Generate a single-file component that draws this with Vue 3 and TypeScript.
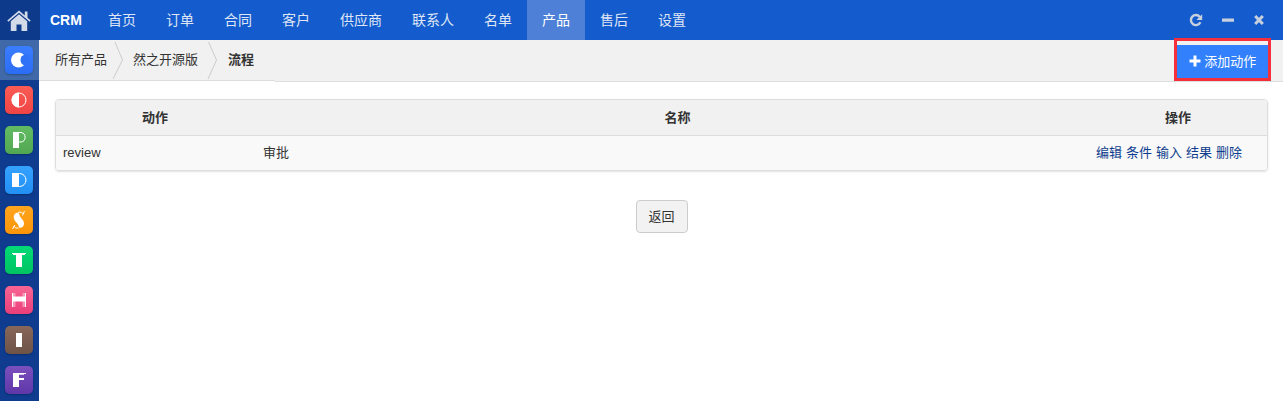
<script setup lang="ts">
const navItems: string[] = ['首页', '订单', '合同', '客户', '供应商', '联系人', '名单', '产品', '售后', '设置']
const apps: { key: string; color: string; top: string }[] = [
  { key: 'c', color: '#2b6cf5', top: '#3a7dff' },
  { key: 'o', color: '#f04444', top: '#fa5c54' },
  { key: 'p', color: '#52a852', top: '#62bb62' },
  { key: 'd', color: '#2290f4', top: '#35a2ff' },
  { key: 's', color: '#fb9508', top: '#ffa51e' },
  { key: 't', color: '#00c462', top: '#00d977' },
  { key: 'h', color: '#ea3f79', top: '#f76594' },
  { key: 'i', color: '#6f5347', top: '#86675a' },
  { key: 'f', color: '#5f37a8', top: '#7a50bd' }
]
const ops: string[] = ['编辑', '条件', '输入', '结果', '删除']
</script>

<template>
  <div class="page">
    <aside class="side">
      <div class="home">
        <svg width="24" height="21" viewBox="0 0 24 21">
          <path d="M12 0.500 0.300 10.500 1.300 11.700 12 2.700 22.700 11.700 23.700 10.500 20.500 7.800V1.500H17.800V5.500Z" fill="#d3dae8" />
          <path d="M12 4.300 3.800 11.200V21H9.500V14.500H14.500V21H20.200V11.200Z" fill="#d3dae8" />
        </svg>
      </div>
      <div v-for="(a, i) in apps" :key="a.key" class="cell" :class="{ on: i === 0 }">
        <span class="tile" :style="{ background: `linear-gradient(${a.top}, ${a.color})` }">
          <svg width="28" height="28" viewBox="0 0 28 28" fill="#fff">
            <template v-if="a.key === 'c'">
              <circle cx="13.500" cy="14" r="7.500" />
              <ellipse cx="20" cy="14" rx="4.500" ry="5.200" fill="#2f72f8" />
            </template>
            <template v-else-if="a.key === 'o'">
              <path d="M14 6.500A7.500 7.500 0 0 0 14 21.500Z" />
              <circle cx="14" cy="14" r="7" fill="none" stroke="#fff" stroke-width="1" />
            </template>
            <template v-else-if="a.key === 'p'">
              <rect x="8" y="6" width="6" height="16" />
              <path d="M14 6.500H16A4.800 4.800 0 0 1 16 16H14" fill="none" stroke="#fff" stroke-width="1" />
            </template>
            <template v-else-if="a.key === 'd'">
              <rect x="7" y="7" width="7" height="14" />
              <path d="M14 7.500H14.500A6.500 6.500 0 0 1 14.500 20.500H14" fill="none" stroke="#fff" stroke-width="1" />
            </template>
            <template v-else-if="a.key === 's'">
              <path d="M9.500 8.500C11 6 14.500 6.500 14.500 9 14.500 11.500 19 13.500 19 17.500 19 21 16 22.500 13.800 21.500 14.500 19 11 16.500 9.500 14 8.500 12 8.500 10 9.500 8.500Z" />
              <path d="M13 6.500C15.500 5.500 17.500 6.500 18.500 8M19.500 5 17.500 9.500M13.500 22C11.500 22.500 9.500 21.500 8.500 20M7.500 23 10 19" fill="none" stroke="#fff" stroke-width="1" />
            </template>
            <template v-else-if="a.key === 't'">
              <rect x="7" y="7" width="14" height="1" />
              <rect x="8" y="8" width="12" height="1" />
              <rect x="11" y="8" width="6" height="13" />
            </template>
            <template v-else-if="a.key === 'h'">
              <rect x="7" y="7" width="1" height="14" />
              <rect x="20" y="7" width="1" height="14" />
              <rect x="8" y="7" width="2.500" height="14" opacity=".4" />
              <rect x="17.500" y="7" width="2.500" height="14" opacity=".4" />
              <rect x="8" y="10.500" width="12" height="5" />
            </template>
            <template v-else-if="a.key === 'i'">
              <rect x="11" y="7" width="6" height="14" />
            </template>
            <template v-else>
              <rect x="8" y="7" width="6" height="14" />
              <rect x="14" y="7" width="7" height="1" />
              <rect x="14" y="8" width="5" height="1" opacity=".7" />
              <rect x="14" y="12" width="5" height="2" />
            </template>
          </svg>
        </span>
      </div>
    </aside>

    <main class="main">
      <header class="top">
        <strong class="brand">CRM</strong>
        <nav class="nav">
          <a v-for="n in navItems" :key="n" class="nav-item" :class="{ active: n === '产品' }">{{ n }}</a>
        </nav>
        <div class="win">
          <svg width="12" height="14" viewBox="0 0 12 14" overflow="visible">
            <path d="M10.400 9.300A5 5 0 1 1 9.800 3.900" fill="none" stroke="#c9d0dd" stroke-width="2.400" />
            <path d="M12.200 1.200V7H6.400Z" fill="#c9d0dd" />
          </svg>
          <svg width="12" height="14" viewBox="0 0 12 14"><rect x="0" y="5.500" width="12" height="3.200" rx="0.500" fill="#c9d0dd" /></svg>
          <svg width="10" height="14" viewBox="0 0 10 14">
            <path d="M1.200 3 8.800 11M8.800 3 1.200 11" stroke="#c9d0dd" stroke-width="3" />
          </svg>
        </div>
      </header>

      <div class="sub">
        <div class="crumbs">
          <span class="crumb">所有产品</span>
          <svg class="chev first" width="10" height="41" viewBox="0 0 10 41"><path d="M1 2 8.500 20 -1 39" fill="none" stroke="#ccc" /></svg>
          <span class="crumb">然之开源版</span>
          <svg class="chev" width="10" height="41" viewBox="0 0 10 41"><path d="M0.500 2 8.500 20 0 39" fill="none" stroke="#ccc" /></svg>
          <strong class="crumb">流程</strong>
        </div>
        <div class="mark">
          <button class="add" type="button">
            <svg width="12" height="12" viewBox="0 0 12 12"><path d="M4.500 0.500H7.500V4.500H11.500V7.500H7.500V11.500H4.500V7.500H0.500V4.500H4.500Z" fill="#fff" /></svg>
            添加动作
          </button>
        </div>
      </div>

      <section class="content">
        <div class="panel">
          <div class="row head">
            <div class="c1">动作</div>
            <div class="c2">名称</div>
            <div class="c3">操作</div>
          </div>
          <div class="row body">
            <div class="c1">review</div>
            <div class="c2">审批</div>
            <div class="c3 ops"><a v-for="o in ops" :key="o">{{ o }}</a></div>
          </div>
        </div>
        <div class="foot"><button class="back" type="button">返回</button></div>
      </section>
    </main>
  </div>
</template>

<style scoped>
.page {
  display: flex;
  width: 1283px;
  height: 401px;
  overflow: hidden;
  background: #fff;
  color: #333;
  font: 13px/20px "Liberation Sans", "Noto Sans CJK SC", sans-serif;
}
.side {
  flex: 0 0 39px;
  width: 39px;
  min-width: 0;
  display: flex;
  flex-direction: column;
  background: #0f3c8f;
  position: relative;
  z-index: 1;
}
.home {
  height: 40px;
  flex: none;
  display: flex;
  align-items: center;
  justify-content: center;
  width: 40px;
  padding-right: 2px;
  box-sizing: border-box;
  background: #0d3a8a;
}
.cell {
  flex: none;
  height: 40px;
  display: flex;
  align-items: center;
  padding-left: 5px;
}
.cell.on {
  background: #3f69a8;
}
.tile {
  width: 28px;
  height: 28px;
  border-radius: 5px;
  box-shadow: 0 1px 2px rgba(0, 0, 0, 0.25);
  display: block;
}
.tile svg {
  display: block;
}
.main {
  flex: 1;
  min-width: 0;
  display: flex;
  flex-direction: column;
}
.top {
  flex: none;
  height: 40px;
  display: flex;
  align-items: center;
  background: #145ccd;
  color: #dfe6f5;
}
.brand {
  margin-left: 11px;
  width: 43px;
  font-size: 14px;
  color: #fff;
}
.nav {
  display: flex;
  height: 100%;
}
.nav-item {
  padding: 0 15px;
  font-size: 14px;
  line-height: 40px;
}
.nav-item.active {
  background: #4d80d6;
  color: #fff;
}
.win {
  margin-left: auto;
  margin-right: 19px;
  display: flex;
  gap: 20px;
  align-items: center;
}
.sub {
  flex: none;
  height: 42px;
  box-sizing: border-box;
  display: flex;
  background: #f1f1f1;
  border-bottom: 1px solid #ddd;
  position: relative;
}
.crumbs {
  box-sizing: border-box;
  display: flex;
  align-items: center;
  width: 236px;
  padding-left: 16px;
  height: 41px;
  border-bottom: 1px solid #ddd;
  box-shadow: 0 1px 0 #fff;
}
.crumb {
  white-space: nowrap;
}
.chev {
  margin: 0 10px;
  flex: none;
  overflow: visible;
}
.chev.first {
  margin: 0 9px 0 7px;
}
.mark {
  position: absolute;
  right: 12px;
  top: -2px;
  box-sizing: border-box;
  width: 97px;
  height: 43px;
  border: 3px solid #f5303a;
  padding-top: 4px;
}
.add {
  display: block;
  width: 100%;
  height: 33px;
  border: 0;
  padding: 0;
  background: #3280fc;
  color: #fff;
  font: inherit;
}
.add svg {
  vertical-align: -1px;
}
.content {
  padding: 17px 15px 0 16px;
}
.panel {
  border: 1px solid #ddd;
  border-radius: 4px;
  box-shadow: 0 1px 2px rgba(0, 0, 0, 0.12);
  overflow: hidden;
}
.row {
  display: grid;
  grid-template-columns: 200px 1fr 180px;
  align-items: center;
}
.head {
  height: 36px;
  box-sizing: border-box;
  background: #f1f1f1;
  border-bottom: 1px solid #ddd;
  text-align: center;
  font-weight: 700;
}
.head .c1 {
  padding-right: 2px;
}
.head .c2 {
  padding-left: 12px;
}
.head .c3 {
  padding-left: 2px;
}
.body {
  height: 34px;
  background: #f9f9f9;
}
.body .c1,
.body .c2 {
  padding-left: 7px;
}
.body .c3 {
  padding-left: 9px;
}
.ops {
  display: flex;
  gap: 4px;
  color: #0d3d8e;
}
.foot {
  margin-top: 29px;
  text-align: center;
}
.back {
  width: 52px;
  height: 33px;
  border: 1px solid #ccc;
  border-radius: 4px;
  background: #f2f2f2;
  color: #333;
  font: inherit;
  padding: 0;
}
</style>
